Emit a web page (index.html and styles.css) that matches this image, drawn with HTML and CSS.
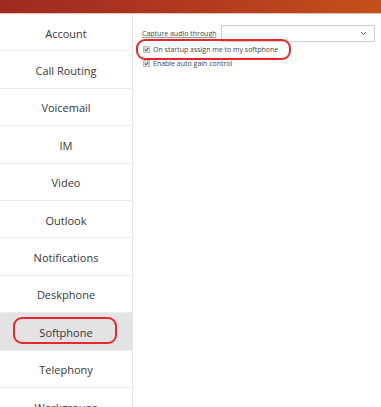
FILE: index.html
```html
<!DOCTYPE html>
<html lang="en">
<head>
    <meta charset="UTF-8">
    <title>Settings</title>
    <link rel="stylesheet" href="styles.css">
</head>
<body>
    <div class="topbar"></div>
    <div class="layout">
        <nav class="sidebar">
            <div class="nav-item">Account</div>
            <div class="nav-item">Call Routing</div>
            <div class="nav-item">Voicemail</div>
            <div class="nav-item">IM</div>
            <div class="nav-item">Video</div>
            <div class="nav-item">Outlook</div>
            <div class="nav-item">Notifications</div>
            <div class="nav-item">Deskphone</div>
            <div class="nav-item active">Softphone<span class="mark mark-nav"></span></div>
            <div class="nav-item">Telephony</div>
            <div class="nav-item">Workgroups</div>
        </nav>
        <main class="panel">
            <div class="field">
                <label class="field-label">Capture audio through</label>
                <div class="select">
                    <svg width="7" height="5" viewBox="0 0 7 5"><path d="M1 1 L3.5 3.5 L6 1" fill="none" stroke="#666" stroke-width="1"/></svg>
                </div>
            </div>
            <div class="check-row">
                <span class="check"><svg width="7" height="7" viewBox="0 0 7 7"><path d="M1.2 3.6 L2.9 5.3 L5.9 1.5" fill="none" stroke="#222" stroke-width="1.3"/></svg></span>
                On startup assign me to my softphone
                <span class="mark mark-check"></span>
            </div>
            <div class="check-row">
                <span class="check"><svg width="7" height="7" viewBox="0 0 7 7"><path d="M1.2 3.6 L2.9 5.3 L5.9 1.5" fill="none" stroke="#222" stroke-width="1.3"/></svg></span>
                Enable auto gain control
            </div>
        </main>
    </div>
</body>
</html>
```

FILE: styles.css
```css
* {
    margin: 0;
    padding: 0;
    box-sizing: border-box;
}

body {
    font-family: 'Open Sans', 'Noto Sans', sans-serif;
    background-color: #fff;
    color: #333;
    width: 381px;
    height: 407px;
    overflow: hidden;
}

.topbar {
    height: 14px;
    background: linear-gradient(90deg, #9e2a22 0%, #b0391f 50%, #c4501a 100%);
    border-bottom: 1px solid #e8c0b0;
}

.layout {
    display: flex;
}

.sidebar {
    width: 133px;
    border-right: 1px solid #e6e6e6;
    display: flex;
    flex-direction: column;
}

.nav-item {
    position: relative;
    height: 37.4px;
    padding-top: 2px;
    display: flex;
    align-items: center;
    justify-content: center;
    font-size: 11px;
    color: #383838;
    border-bottom: 1px solid #ececec;
    flex-shrink: 0;
}

.nav-item.active {
    background-color: #e3e3e3;
}

.panel {
    flex: 1;
    padding: 11px 5px 0 9px;
    font-size: 7px;
    color: #444;
}

.field {
    display: flex;
    align-items: center;
    gap: 4px;
}

.field-label {
    text-decoration: underline;
    text-decoration-color: #999;
}

.select {
    width: 154px;
    height: 17px;
    border: 1px solid #cfcfcf;
    display: flex;
    align-items: center;
    justify-content: flex-end;
    padding-right: 7px;
}

.check-row {
    position: relative;
    display: flex;
    align-items: center;
    gap: 3px;
    height: 14px;
    margin-left: 1px;
}

.check {
    width: 7px;
    height: 7px;
    background-color: #ddd;
    border: 1px solid #bbb;
    display: flex;
    align-items: center;
    justify-content: center;
}

.check svg {
    display: block;
}

.mark {
    position: absolute;
    border: 2px solid #e8262c;
    border-radius: 9px;
}

.mark-nav {
    left: 13px;
    top: 4px;
    width: 104px;
    height: 27px;
}

.mark-check {
    left: -7px;
    top: -3px;
    width: 155px;
    height: 21px;
}
```
